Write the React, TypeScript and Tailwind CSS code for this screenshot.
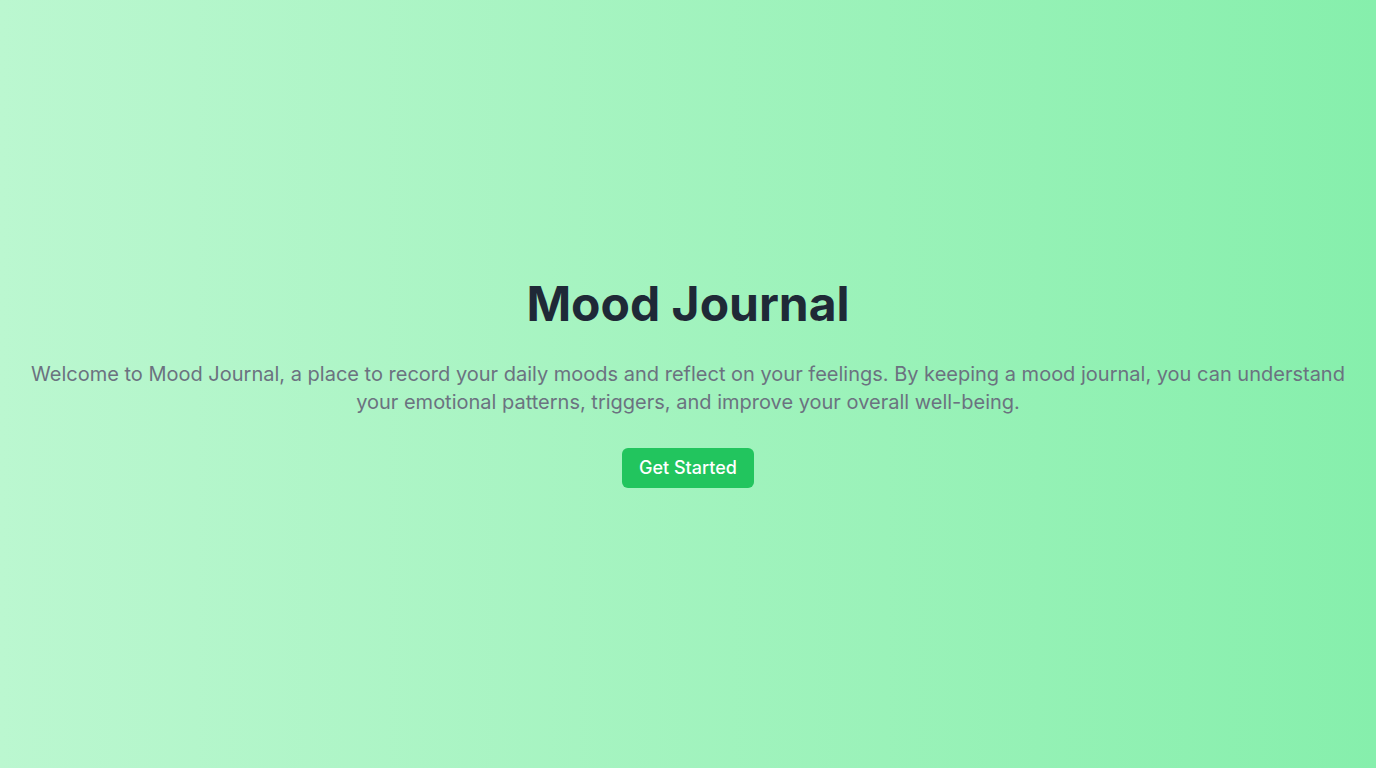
export default function App() {
  return (
    <div
      className="min-h-screen flex flex-col items-center justify-center bg-gradient-to-r from-[#bbf7d0] to-[#86efac] px-4 text-center"
      style={{ fontFamily: "Inter, 'Noto Sans', sans-serif" }}
    >
      <h1 className="text-5xl font-bold text-[#1f2937] mb-8">Mood Journal</h1>
      <p className="text-xl text-[#6b7280] mb-8">
        Welcome to Mood Journal, a place to record your daily moods and reflect on your feelings. By keeping a mood journal, you can understand your emotional patterns, triggers, and improve your overall well-being.
      </p>
      <button className="bg-[#22c55e] text-white text-lg font-medium px-[17px] py-1.5 rounded-md">Get Started</button>
    </div>
  );
}
